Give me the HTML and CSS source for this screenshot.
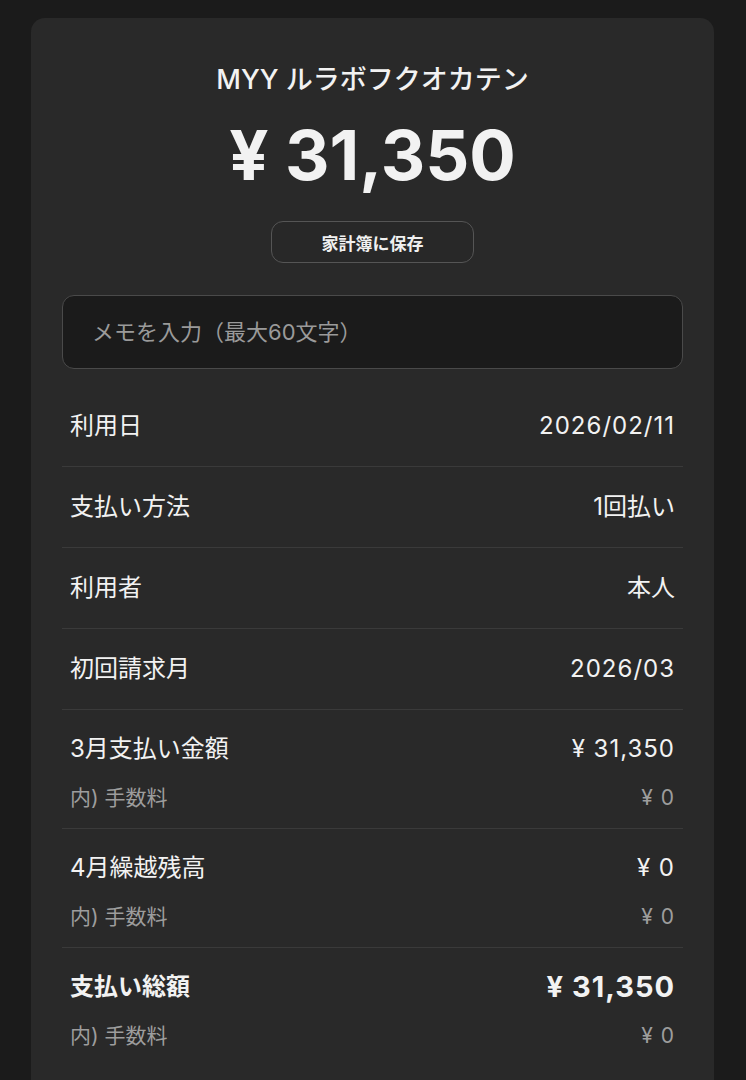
FILE: index.html
```html
<!DOCTYPE html>
<html lang="ja">

<head>
    <meta charset="UTF-8">
    <meta name="viewport" content="width=device-width, initial-scale=1.0">
    <title>利用明細</title>
    <link rel="stylesheet" href="styles.css">
</head>

<body>
    <div class="card">
        <div class="shop-name">MYY ルラボフクオカテン</div>
        <div class="amount">¥ 31,350</div>
        <div class="save-wrap">
            <button class="save-btn">家計簿に保存</button>
        </div>

        <div class="memo">
            <input type="text" placeholder="メモを入力（最大60文字）">
        </div>

        <ul class="details">
            <li class="row">
                <div class="line">
                    <span>利用日</span>
                    <span class="num">2026/02/11</span>
                </div>
            </li>
            <li class="row">
                <div class="line">
                    <span>支払い方法</span>
                    <span>1回払い</span>
                </div>
            </li>
            <li class="row">
                <div class="line">
                    <span>利用者</span>
                    <span>本人</span>
                </div>
            </li>
            <li class="row">
                <div class="line">
                    <span>初回請求月</span>
                    <span class="num">2026/03</span>
                </div>
            </li>
            <li class="row has-sub">
                <div class="line">
                    <span>3月支払い金額</span>
                    <span class="num">¥ 31,350</span>
                </div>
                <div class="line sub">
                    <span>内) 手数料</span>
                    <span class="num">¥ 0</span>
                </div>
            </li>
            <li class="row has-sub">
                <div class="line">
                    <span>4月繰越残高</span>
                    <span class="num">¥ 0</span>
                </div>
                <div class="line sub">
                    <span>内) 手数料</span>
                    <span class="num">¥ 0</span>
                </div>
            </li>
            <li class="row has-sub total">
                <div class="line">
                    <span>支払い総額</span>
                    <span class="num total-value">¥ 31,350</span>
                </div>
                <div class="line sub">
                    <span>内) 手数料</span>
                    <span class="num">¥ 0</span>
                </div>
            </li>
        </ul>
    </div>
</body>

</html>
```

FILE: styles.css
```css
body {
    font-family: Inter, "Noto Sans CJK JP", sans-serif;
    background-color: #1b1b1b;
    color: #f2f2f2;
    margin: 0;
    padding: 18px 32px 0 31px;
}

.card {
    background-color: #292929;
    border-radius: 14px 14px 0 0;
    padding: 46px 31px 40px;
}

.shop-name {
    text-align: center;
    font-size: 27px;
    line-height: 32px;
    font-weight: 500;
}

.amount {
    text-align: center;
    font-size: 69px;
    line-height: 80px;
    font-weight: 700;
    margin-top: 19px;
}

.save-wrap {
    display: flex;
    justify-content: center;
    margin-top: 26px;
}

.save-btn {
    width: 203px;
    height: 42px;
    background-color: #282828;
    border: 1.5px solid #555;
    border-radius: 12px;
    color: #f0f0f0;
    font-family: inherit;
    font-size: 17px;
    font-weight: 700;
}

.memo {
    margin-top: 32px;
}

.memo input {
    box-sizing: border-box;
    width: 100%;
    height: 74px;
    padding: 0 29px;
    background-color: #1b1b1b;
    border: 1.5px solid #4a4a4a;
    border-radius: 12px;
    color: #f2f2f2;
    font-family: inherit;
    font-size: 22px;
    outline: none;
}

.memo input::placeholder {
    color: #9a9a9a;
}

.details {
    list-style-type: none;
    margin: 17px 0 0;
    padding: 0;
}

.row {
    padding: 20px 8px;
    border-bottom: 1px solid #3a3a3a;
}

.row.has-sub {
    padding: 19px 8px 18px;
}

.row:last-child {
    border-bottom: none;
}

.line {
    display: flex;
    justify-content: space-between;
    align-items: center;
    font-size: 24px;
    line-height: 40px;
}

.num {
    letter-spacing: 1px;
}

.line.sub {
    margin-top: 17px;
    font-size: 21px;
    line-height: 24px;
    color: #9d9d9d;
}

.total .line:first-child {
    font-weight: 700;
}

.total-value {
    font-size: 29px;
}
```
